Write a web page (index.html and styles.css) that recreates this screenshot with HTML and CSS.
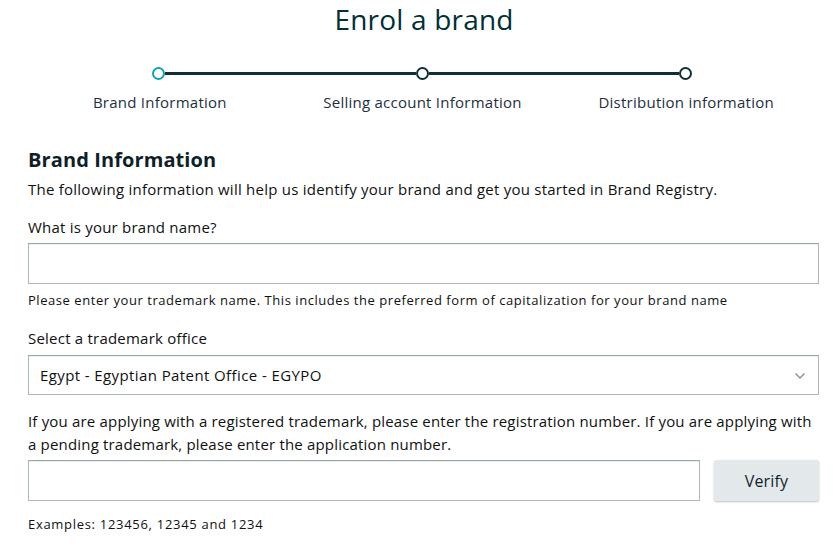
FILE: index.html
```html
<!DOCTYPE html>
<html lang="en">
<head>
<meta charset="utf-8">
<title>Enrol a brand</title>
<link rel="stylesheet" href="styles.css">
</head>
<body>
<main class="page">
  <h1 class="title">Enrol a brand</h1>
  <div class="stepper">
    <div class="track">
      <span class="dot dot-active"></span>
      <span class="line"></span>
      <span class="dot"></span>
      <span class="line"></span>
      <span class="dot"></span>
    </div>
    <div class="labels">
      <span class="label l1">Brand Information</span>
      <span class="label l2">Selling account Information</span>
      <span class="label l3">Distribution information</span>
    </div>
  </div>

  <section class="form">
    <h2 class="heading">Brand Information</h2>
    <p class="intro">The following information will help us identify your brand and get you started in Brand Registry.</p>

    <label class="field-label">What is your brand name?</label>
    <div class="input"></div>
    <p class="hint">Please enter your trademark name. This includes the preferred form of capitalization for your brand name</p>

    <label class="field-label sel-label">Select a trademark office</label>
    <div class="input select">
      <span>Egypt - Egyptian Patent Office - EGYPO</span>
      <svg class="chev" width="12" height="8" viewBox="0 0 12 8"><path d="M1.5 1.5 L6 6 L10.5 1.5" fill="none" stroke="#8a9699" stroke-width="1.5"/></svg>
    </div>

    <p class="para">If you are applying with a registered trademark, please enter the registration number. If you are applying with a pending trademark, please enter the application number.</p>
    <div class="verify-row">
      <div class="input grow"></div>
      <button class="btn">Verify</button>
    </div>
    <p class="hint examples">Examples: 123456, 12345 and 1234</p>
  </section>
</main>
</body>
</html>
```

FILE: styles.css
```css
* { box-sizing: border-box; }
html, body { margin: 0; padding: 0; background: #fff; }
body {
  font-family: "Open Sans", "Noto Sans", sans-serif;
  color: #0f1111;
  width: 834px;
  overflow: hidden;
}
.page { padding: 0 15px 0 28px; }
.title {
  margin: 0;
  padding-top: 2px;
  text-align: center;
  font-size: 28px;
  font-weight: 400;
  line-height: 34px;
  color: #002f36;
  padding-left: 1px;
  letter-spacing: 0.2px;
}
.stepper { margin-top: 30px; }
.track {
  display: flex;
  align-items: center;
  padding-left: 124px;
  padding-right: 127px;
  height: 14px;
}
.dot {
  width: 13px;
  height: 13px;
  border: 2.5px solid #0d2f38;
  border-radius: 50%;
  flex: none;
  background: #fff;
}
.dot-active { border-color: #11a3b4; }
.line {
  flex: 1;
  height: 3px;
  background: #0d2f38;
}
.labels {
  display: flex;
  margin-top: 12px;
  font-size: 15px;
  letter-spacing: 0.25px;
  color: #232f3e;
  height: 20px;
  line-height: 20px;
  white-space: nowrap;
}
.label { text-align: center; }
.l1 { width: 264px; }
.l2 { width: 262px; }
.l3 { width: 266px; }

.form { margin-top: 35px; }
.heading {
  margin: 0;
  font-size: 20px;
  font-weight: 700;
  line-height: 26px;
  color: #0f1f2a;
  letter-spacing: 0.1px;
}
.intro {
  margin: 5px 0 0;
  font-size: 15px;
  letter-spacing: 0.24px;
  line-height: 22px;
  color: #0f1111;
}
.field-label {
  display: block;
  margin-top: 17px;
  font-size: 15px;
  letter-spacing: 0.22px;
  line-height: 20px;
  color: #0f1111;
}
.input {
  margin-top: 6px;
  height: 41px;
  border: 1px solid #aab7b8;
  border-top-color: #98a5a6;
  box-shadow: inset 0 1px 0 #eef1f1;
  width: 791px;
  background: #fff;
}
.hint {
  margin: 7px 0 0;
  font-size: 13px;
  letter-spacing: 0.55px;
  line-height: 18px;
  color: #0f1111;
  white-space: nowrap;
}
.sel-label { margin-top: 19px; }
.select {
  display: flex;
  align-items: center;
  justify-content: space-between;
  padding: 0 12px 0 11px;
  font-size: 15px;
  letter-spacing: 0.4px;
  color: #0f1111;
  margin-top: 7px;
  height: 40px;
}
.chev { margin-top: 1px; }
.para {
  margin: 15px 0 0;
  font-size: 15px;
  letter-spacing: 0.18px;
  line-height: 23px;
  color: #0f1111;
  width: 794px;
}
.verify-row {
  display: flex;
  gap: 14px;
  margin-top: 4px;
  width: 791px;
}
.grow { flex: 1; width: auto; margin-top: 0; }
.btn {
  width: 105px;
  height: 41px;
  border: none;
  border-radius: 3px;
  background: #e3e9eb;
  box-shadow: 0 1px 2px rgba(0,0,0,0.25);
  font-family: inherit;
  font-size: 16px;
  letter-spacing: 0.2px;
  color: #0f1f2a;
}
.examples { margin-top: 14px; letter-spacing: 0.7px; }
```
